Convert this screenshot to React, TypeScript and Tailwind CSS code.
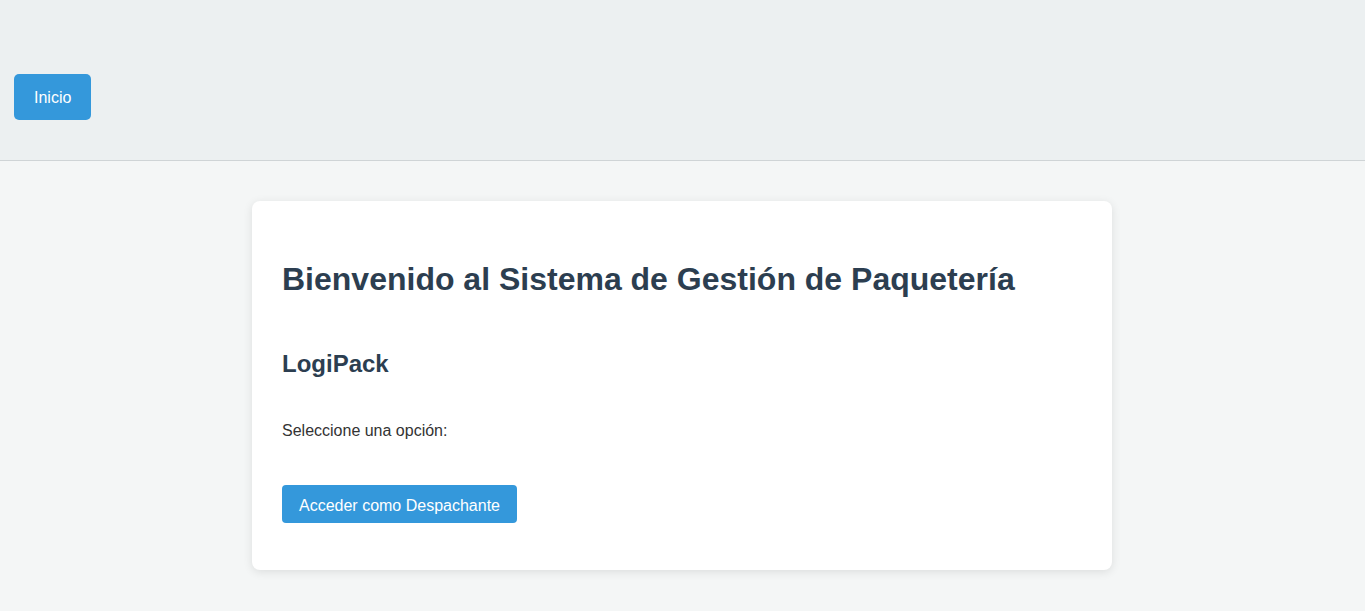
import React from "react";

const App = () => {
  return (
    <div className="min-h-screen bg-[#f4f6f6] font-['Liberation_Sans',Arial,sans-serif]">
      {/* cabecera */}
      <header className="h-[161px] bg-[#ecf0f1] border-b border-[#cfd4d6] pl-[14px] pt-[74px]">
        <button className="h-[46px] px-5 pt-[2px] rounded-[5px] bg-[#3498db] text-white text-base">
          Inicio
        </button>
      </header>

      <main className="flex justify-center pt-10 pr-px">
        <div className="w-[860px] bg-white rounded-lg shadow-[0_2px_10px_rgba(0,0,0,0.1)] px-[30px] pt-[60px] pb-[47px]">
          <h1 className="text-[32px] leading-[37px] font-bold text-[#2c3e50]">
            Bienvenido al Sistema de Gestión de Paquetería
          </h1>
          <h2 className="mt-[52px] text-[24px] leading-[28px] font-bold text-[#2c3e50]">
            LogiPack
          </h2>
          <p className="mt-[44px] text-base leading-[18px] text-[#333]">
            Seleccione una opción:
          </p>
          <button className="mt-[45px] h-[38px] px-[17px] pt-[3px] rounded-[4px] bg-[#3498db] text-white text-base">
            Acceder como Despachante
          </button>
        </div>
      </main>
    </div>
  );
};

export default App;
